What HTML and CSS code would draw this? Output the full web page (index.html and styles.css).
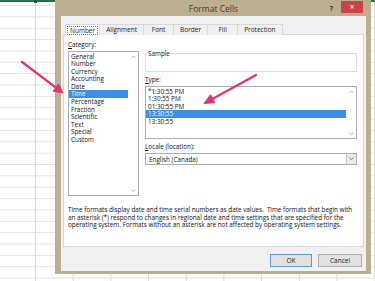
FILE: index.html
```html
<!DOCTYPE html>
<html lang="en">
<head>
  <meta charset="UTF-8" />
  <title>Format Cells</title>
  <link rel="stylesheet" href="styles.css">
</head>
<body>
  <!-- spreadsheet behind the dialog -->
  <div class="sheet-bar"><span class="cell-mark"></span></div>

  <!-- dialog window -->
  <div class="dialog">
    <div class="titlebar">
      <span></span>
      <span class="title">Format Cells</span>
      <span class="controls">
        <span class="help">?</span>
        <span class="close">&times;</span>
      </span>
    </div>

    <div class="dialog-body">
      <div class="tabs">
        <span class="tab active"><span class="focus">Number</span></span>
        <span class="tab">Alignment</span>
        <span class="tab">Font</span>
        <span class="tab">Border</span>
        <span class="tab">Fill</span>
        <span class="tab">Protection</span>
      </div>

      <div class="panel">
        <div class="panel-cols">
          <!-- left: category -->
          <div class="col-left">
            <div class="label"><u>C</u>ategory:</div>
            <div class="listbox category">
              <ul class="items">
                <li>General</li>
                <li>Number</li>
                <li>Currency</li>
                <li>Accounting</li>
                <li>Date</li>
                <li class="selected">Time</li>
                <li>Percentage</li>
                <li>Fraction</li>
                <li>Scientific</li>
                <li>Text</li>
                <li>Special</li>
                <li>Custom</li>
              </ul>
              <div class="scroll">
                <svg viewBox="0 0 6 4"><polyline points="0.5,3.5 3,1 5.5,3.5"/></svg>
                <svg viewBox="0 0 6 4"><polyline points="0.5,0.5 3,3 5.5,0.5"/></svg>
              </div>
            </div>
          </div>

          <!-- right: sample, type, locale -->
          <div class="col-right">
            <fieldset class="sample"><legend>Sample</legend></fieldset>
            <div class="label gap"><u>T</u>ype:</div>
            <div class="listbox type">
              <ul class="items">
                <li>*1:30:55 PM</li>
                <li>1:30:55 PM</li>
                <li>01:30:55 PM</li>
                <li class="selected">13:30:55</li>
                <li>13:30:55</li>
              </ul>
              <div class="scroll">
                <svg viewBox="0 0 6 4"><polyline points="0.5,3.5 3,1 5.5,3.5"/></svg>
                <svg viewBox="0 0 6 4"><polyline points="0.5,0.5 3,3 5.5,0.5"/></svg>
              </div>
            </div>
            <div class="label gap"><u>L</u>ocale (location):</div>
            <div class="select">
              <span class="select-text">English (Canada)</span>
              <span class="chev"><svg viewBox="0 0 6 4"><polyline points="0.5,0.5 3,3 5.5,0.5"/></svg></span>
            </div>
          </div>
        </div>

        <p class="desc">Time formats display date and time serial numbers as date values.&nbsp; Time formats that begin with<br>an asterisk (*) respond to changes in regional date and time settings that are specified for the<br>operating system. Formats without an asterisk are not affected by operating system settings.</p>
      </div>

      <div class="buttons">
        <button class="btn default">OK</button>
        <button class="btn">Cancel</button>
      </div>
    </div>
  </div>

  <!-- annotation arrows -->
  <svg class="arrows" viewBox="0 0 375 281">
    <line x1="22" y1="62" x2="56" y2="87.6"/>
    <polygon points="63,93 53.1,91.2 58.5,84"/>
    <line x1="256" y1="75" x2="212.8" y2="98.7"/>
    <polygon points="204,103.5 210.6,94.7 214.9,102.6"/>
  </svg>
</body>
</html>
```

FILE: styles.css
```css
/* ========== page / spreadsheet ========== */
body{margin:0;width:375px;height:281px;overflow:hidden;position:relative;
     font-family:"Open Sans","Noto Sans",sans-serif;color:#111;
     background-color:#fff;
     background-image:linear-gradient(to right,#d9d9d9 1px,transparent 1px),
                      linear-gradient(to bottom,#e2e2e2 1px,transparent 1px);
     background-size:37.7px 100%,100% 11.37px;
     background-position:35px 0,0 5px;}
.sheet-bar{height:2px;background:#217346;position:relative;}
.cell-mark{display:block;position:absolute;left:34px;top:0;width:3px;height:3px;background:#185c37;}

/* ========== dialog window ========== */
.dialog{position:absolute;left:55px;top:0;width:316px;height:274px;box-sizing:border-box;
        background:#bcae90;padding:0 5px 3px 6px;display:flex;flex-direction:column;}
.titlebar{height:16px;display:grid;grid-template-columns:1fr auto 1fr;align-items:center;}
.title{font-size:8.5px;color:#3d3d3d;}
.controls{display:flex;justify-content:flex-end;align-items:flex-start;align-self:start;}
.help{font-size:7px;font-weight:bold;color:#333;margin:4px 8px 0 0;}
.close{width:22px;height:12px;margin:1px 3px 0 0;background:#c94545;color:#fff;font-size:9px;
       line-height:11px;text-align:center;}

.dialog-body{flex:1;background:#f0f0f0;padding:8px 2px 0;display:flex;flex-direction:column;}

/* ---------- tabs ---------- */
.tabs{display:flex;height:11px;margin-left:2px;position:relative;z-index:1;}
.tab{font-size:6.5px;line-height:10px;min-width:30px;padding:0 6px;box-sizing:border-box;text-align:center;
     border:1px solid #d9d9d9;border-bottom:none;border-left:none;background:#f0f0f0;color:#222;}
.tab.active{background:#fff;border-left:1px solid #d9d9d9;padding:0 1px;height:11px;min-width:33px;}
.tab .focus{display:inline-block;border:1px dotted #777;line-height:7px;padding:0 2px;margin-top:1px;}

/* ---------- panel ---------- */
.panel{height:213px;box-sizing:border-box;background:#fff;border:1px solid #d9d9d9;margin-top:-1px;
       padding:6px 6px 0 4px;font-size:6.35px;}
.panel-cols{display:grid;grid-template-columns:71px 212px;column-gap:6px;}
.label{line-height:7px;margin-bottom:3px;}
.label.gap{margin-top:3.5px;margin-bottom:3.5px;}

.listbox{border:1px solid #abadb3;box-sizing:border-box;display:flex;}
.listbox.category{height:145px;}
.listbox.type{height:53px;}
.items{list-style:none;margin:0;padding:0.5px 0 0;flex:1;}
.items li{line-height:7.6px;height:7.6px;padding-left:2px;white-space:nowrap;}
.items li.selected{background:#3d8fe6;color:#fff;}
.listbox.type .items li{line-height:7.5px;height:7.5px;}
.scroll{width:10px;display:flex;flex-direction:column;justify-content:space-between;align-items:center;
        padding:3px 0;}
.scroll svg,.chev svg{width:5px;height:3.5px;fill:none;stroke:#a0a0a0;stroke-width:0.9;}

.sample{margin:8.5px 0 0;padding:0;height:22.5px;box-sizing:border-box;border:1px solid #dcdcdc;min-inline-size:0;}
.sample legend{padding:0 1px;margin-left:1px;line-height:7px;}

.select{height:12px;box-sizing:border-box;border:1px solid #abadb3;display:flex;align-items:center;}
.select-text{flex:1;padding-left:3px;}
.chev{width:10px;height:10px;box-sizing:border-box;border-left:1px solid #c8c8c8;background:#eaeaea;
      display:flex;align-items:center;justify-content:center;}
.chev svg{stroke:#555;}

.desc{margin:10px 0 0;line-height:7.5px;white-space:nowrap;}

/* ---------- buttons ---------- */
.buttons{display:flex;justify-content:flex-end;gap:6px;margin-top:7px;padding-right:2px;}
.btn{height:13px;width:42px;padding:0;font-family:inherit;font-size:6.5px;color:#222;background:#e1e1e1;
     border:1px solid #adadad;border-radius:0;}
.btn.default{border-color:#5e9ad6;}
.btn + .btn{width:44px;}

/* ========== annotation arrows ========== */
.arrows{position:absolute;left:0;top:0;width:375px;height:281px;pointer-events:none;}
.arrows line{stroke:#e6326c;stroke-width:2.2;stroke-linecap:round;}
.arrows polygon{fill:#e6326c;stroke:#e6326c;stroke-width:1;stroke-linejoin:round;}
```
